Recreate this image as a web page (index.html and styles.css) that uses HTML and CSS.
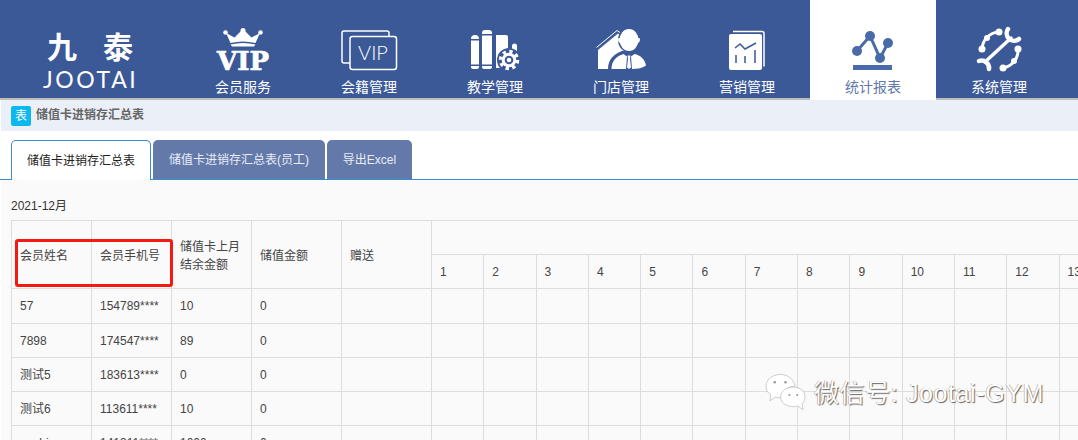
FILE: index.html
```html
<!DOCTYPE html>
<html lang="zh-CN">
<head>
<meta charset="utf-8">
<title>储值卡进销存汇总表</title>
<link rel="stylesheet" href="styles.css">
</head>
<body>
<header class="nav">
  <div class="logo">
    <div class="logo-cn"><span>九</span><span>泰</span></div>
    <div class="logo-en">JOOTAI</div>
  </div>
  <a class="nav-item">
    <svg class="nav-icon" viewBox="0 0 126 60">
      <path fill="#fff" d="M46 13l8.500 4.500L62 10h2l7.500 7.500L80 13l-4.500 10q-12.500-3-25 0z"/>
      <path fill="#fff" d="M50.500 24.500q12.500-3 25 0l-1.500 2H52z"/>
      <circle cx="45.500" cy="12.500" r="2.300" fill="#fff"/><circle cx="63" cy="10.500" r="2.500" fill="#fff"/><circle cx="80.500" cy="12.500" r="2.300" fill="#fff"/>
      <text x="63" y="50" class="vip-word">VIP</text>
    </svg>
    <span class="nav-label">会员服务</span>
  </a>
  <a class="nav-item">
    <svg class="nav-icon" viewBox="0 0 126 60">
      <path fill="none" stroke="#fff" stroke-width="1.500" d="M44 43h-6a2 2 0 0 1-2-2V13a2 2 0 0 1 2-2h43a2 2 0 0 1 2 2v3"/>
      <rect x="44" y="16.500" width="46.500" height="33" rx="2.500" fill="none" stroke="#fff" stroke-width="1.500"/>
      <text x="67" y="40" class="card-vip">VIP</text>
    </svg>
    <span class="nav-label">会籍管理</span>
  </a>
  <a class="nav-item">
    <svg class="nav-icon" viewBox="0 0 126 60">
      <g fill="#fff">
        <path d="M39 19a4 4 0 0 1 8 0z"/><rect x="39" y="20.500" width="8" height="24"/><path d="M39 46h8v1a2 2 0 0 1-2 2h-4a2 2 0 0 1-2-2z"/>
        <path d="M50 13a3 3 0 0 1 3-3h4a3 3 0 0 1 3 3v1H50z"/><rect x="50" y="15.500" width="10" height="29"/><path d="M50 46h10v1a2 2 0 0 1-2 2h-6a2 2 0 0 1-2-2z"/>
        <path d="M64 15h10a2 2 0 0 1 2 2v31H64z"/>
        <path d="M80 26a2.500 2.500 0 0 1 5 0v7h-5z"/>
      </g>
      <circle cx="77" cy="40" r="12" fill="#3b5997"/>
      <circle cx="77" cy="40" r="8.500" fill="none" stroke="#fff" stroke-width="3.500" stroke-dasharray="3.300 3.380"/>
      <circle cx="77" cy="40" r="7.300" fill="#fff"/><circle cx="77" cy="40" r="4.300" fill="#3b5997"/><circle cx="77" cy="40" r="2.300" fill="#fff"/>
    </svg>
    <span class="nav-label">教学管理</span>
  </a>
  <a class="nav-item">
    <svg class="nav-icon" viewBox="0 0 126 60">
      <path fill="none" stroke="#fff" stroke-width="1" d="M38.500 27.500L59 10.500l3 2"/>
      <path fill="#fff" d="M40 30L60 13.500 70 22V40L60 49H40z"/>
      <ellipse cx="71" cy="20" rx="11" ry="12.500" fill="#3b5997"/>
      <ellipse cx="71" cy="20" rx="9.500" ry="11" fill="#fff"/>
      <path fill="#fff" d="M60.500 18h21c1 2 0 5-2 5h-17c-2 0-3-3-2-5z"/>
      <path fill="#3b5997" d="M50 49c0-10 6-15 14-18h14l10 15v3z"/>
      <path fill="#fff" d="M53.500 49c0-8 5-13 12-15l3.500 2.500-1 12.500zM74 49l-1-12.500 3.500-2.500c6 1 10.500 5.500 11.500 11.500-3 2.500-8 3.500-14 3.500z"/>
      <path fill="#fff" d="M69.500 35.500h3l-.5 3 1 9-2 1.500-2-1.500 1-9z"/>
    </svg>
    <span class="nav-label">门店管理</span>
  </a>
  <a class="nav-item">
    <svg class="nav-icon" viewBox="0 0 126 60">
      <path fill="none" stroke="#fff" stroke-width="1.500" d="M49 11.500h29a2 2 0 0 1 2 2v33"/>
      <rect x="45" y="14" width="33" height="36" rx="2" fill="#fff"/>
      <path fill="none" stroke="#3b5997" stroke-width="1.500" d="M51 28l5-4 5 5 11-6"/>
      <path fill="none" stroke="#3b5997" stroke-width="1.500" d="M52 35v8M61 36v7M71 30v13"/>
    </svg>
    <span class="nav-label">营销管理</span>
  </a>
  <a class="nav-item nav-item-active">
    <svg class="nav-icon" viewBox="0 0 126 60">
      <path fill="none" stroke="#4a6ba9" stroke-width="3" d="M47 31L60 16l10 22 8-15"/>
      <g fill="#4a6ba9"><circle cx="47" cy="31" r="5"/><circle cx="60" cy="16" r="5"/><circle cx="70" cy="38" r="5"/><circle cx="78" cy="23" r="5"/><rect x="43" y="45" width="39" height="5"/></g>
    </svg>
    <span class="nav-label">统计报表</span>
  </a>
  <a class="nav-item">
    <svg class="nav-icon" viewBox="0 0 126 60">
      <g fill="none" stroke="#fff" stroke-linecap="round">
        <path stroke-width="3" d="M46 29A18 18 0 0 1 62 12"/>
        <path stroke-width="3" d="M82 29A18 18 0 0 1 67 48"/>
        <path stroke-width="3.500" d="M49 42L75 18"/>
        <path stroke-width="4.500" d="M72 9A7.500 7.500 0 0 0 83 19"/>
        <path stroke-width="4.500" d="M43 41A7.500 7.500 0 0 1 53 49"/>
      </g>
      <g fill="#fff"><circle cx="46" cy="29" r="3.500"/><circle cx="63" cy="12" r="3.500"/><circle cx="82" cy="29" r="3.500"/><circle cx="67" cy="48" r="3.500"/><circle cx="51" cy="18" r="3"/><circle cx="78" cy="41" r="3"/></g>
    </svg>
    <span class="nav-label">系统管理</span>
  </a>
</header>

<div class="crumb">
  <span class="crumb-icon">表</span>
  <span class="crumb-text">储值卡进销存汇总表</span>
</div>

<div class="tabs">
  <a class="tab tab-active">储值卡进销存汇总表</a>
  <a class="tab tab-wide">储值卡进销存汇总表(员工)</a>
  <a class="tab tab-export">导出Excel</a>
</div>

<main class="panel">
  <div class="period">2021-12月</div>
  <table class="report">
    <colgroup>
      <col class="c-80"><col class="c-80"><col class="c-80"><col class="c-90"><col class="c-90">
      <col class="c-day"><col class="c-day"><col class="c-day"><col class="c-day"><col class="c-day"><col class="c-day"><col class="c-day"><col class="c-day"><col class="c-day"><col class="c-day"><col class="c-day"><col class="c-day"><col class="c-day">
    </colgroup>
    <thead>
      <tr class="r-top">
        <th rowspan="2" class="th-main">会员姓名</th>
        <th rowspan="2" class="th-main">会员手机号</th>
        <th rowspan="2" class="th-main">储值卡上月<br>结余金额</th>
        <th rowspan="2" class="th-main">储值金额</th>
        <th rowspan="2" class="th-main">赠送</th>
        <th colspan="13"></th>
      </tr>
      <tr class="r-days">
        <th>1</th><th>2</th><th>3</th><th>4</th><th>5</th><th>6</th><th>7</th><th>8</th><th>9</th><th>10</th><th>11</th><th>12</th><th>13</th>
      </tr>
    </thead>
    <tbody>
      <tr class="r-first"><td>57</td><td>154789****</td><td>10</td><td>0</td><td></td><td></td><td></td><td></td><td></td><td></td><td></td><td></td><td></td><td></td><td></td><td></td><td></td><td></td></tr>
      <tr><td>7898</td><td>174547****</td><td>89</td><td>0</td><td></td><td></td><td></td><td></td><td></td><td></td><td></td><td></td><td></td><td></td><td></td><td></td><td></td><td></td></tr>
      <tr><td>测试5</td><td>183613****</td><td>0</td><td>0</td><td></td><td></td><td></td><td></td><td></td><td></td><td></td><td></td><td></td><td></td><td></td><td></td><td></td><td></td></tr>
      <tr><td>测试6</td><td>113611****</td><td>10</td><td>0</td><td></td><td></td><td></td><td></td><td></td><td></td><td></td><td></td><td></td><td></td><td></td><td></td><td></td><td></td></tr>
      <tr><td>sunbin</td><td>141311****</td><td>1000</td><td>0</td><td></td><td></td><td></td><td></td><td></td><td></td><td></td><td></td><td></td><td></td><td></td><td></td><td></td><td></td></tr>
    </tbody>
  </table>
</main>

<div class="highlight"></div>

<div class="watermark">
  <svg class="wm-icon" viewBox="0 0 42 40">
    <path fill="#fff" stroke="#bdbdbd" stroke-width=".8" d="M16 1C8 1 1 6 1 13c0 4 2 7 5 9l-1 6 6-4c2 1 4 1 6 1h1c-1-6 5-12 12-12h1C29 6 24 1 16 1z"/>
    <path fill="#fff" stroke="#bdbdbd" stroke-width=".8" d="M29 14c-7 0-13 4-13 10s6 10 13 10c2 0 3 0 4-1l6 4-1-6c2-2 3-4 3-7 0-6-5-10-12-10z"/>
    <circle cx="10" cy="9" r="1.300" fill="#999"/><circle cx="21" cy="9" r="1.300" fill="#999"/>
    <circle cx="25" cy="22" r="1.100" fill="#999"/><circle cx="33" cy="22" r="1.100" fill="#999"/>
  </svg>
  <span class="wm-text">微信号: Jootai-GYM</span>
</div>
</body>
</html>
```

FILE: styles.css
```css
* { box-sizing: border-box; }
html, body { margin: 0; padding: 0; }
body {
  width: 1078px;
  height: 440px;
  overflow: hidden;
  position: relative;
  background: #fff;
  color: #333;
  font: 12px/1.4 "Liberation Sans", "Noto Sans CJK SC", sans-serif;
}

.nav {
  display: flex;
  height: 100px;
  background: #3b5997;
  border-bottom: 2px solid #bdbdbd;
}
.logo {
  width: 180px;
  padding: 29px 0 0 47px;
  color: #fff;
}
.logo-cn {
  display: flex;
  gap: 26px;
  font: 700 30px/32px "Noto Sans CJK SC", sans-serif;
}
.logo-en {
  font: 400 23px/24px "Lato", sans-serif;
  letter-spacing: 2.600px;
  margin: 6px 0 0 -4px;
}
.nav-item {
  position: relative;
  width: 126px;
  height: 98px;
  color: #fff;
  display: flex;
  flex-direction: column;
  align-items: center;
}
.nav-icon {
  position: absolute;
  left: 0;
  top: 20px;
  width: 126px;
  height: 60px;
}
.nav-label {
  position: absolute;
  top: 78px;
  font-size: 14px;
  line-height: 18px;
  white-space: nowrap;
}
.nav-item-active {
  background: #fff;
  height: 100px;
  color: #5f79aa;
  z-index: 1;
}
.vip-word {
  fill: #fff;
  stroke: #fff;
  stroke-width: .7px;
  font: 700 26px "DejaVu Serif", serif;
  text-anchor: middle;
}
.card-vip {
  fill: #fff;
  font: 300 20px "Lato", sans-serif;
  text-anchor: middle;
}

.crumb {
  height: 31px;
  background: #ebf0f8;
  margin-left: 1px;
  display: flex;
  align-items: center;
  padding: 0 0 0 10px;
  gap: 5px;
}
.crumb-icon {
  width: 20px;
  height: 20px;
  border-radius: 2px;
  background: #0cb8ee;
  color: #fff;
  font-size: 12px;
  line-height: 20px;
  text-align: center;
}
.crumb-text {
  color: #666;
  font-weight: 700;
  font-size: 12px;
}

.tabs {
  display: flex;
  align-items: flex-end;
  height: 49px;
  padding: 10px 0 0 11px;
  gap: 2px;
  border-bottom: 1px solid #3a8ed0;
}
.tab {
  height: 39px;
  line-height: 40px;
  text-align: center;
  background: #6379aa;
  color: #e8edf6;
  border-radius: 5px 5px 0 0;
  font-size: 12px;
}
.tab-active {
  width: 140px;
  height: 40px;
  margin-bottom: -1px;
  background: #fff;
  color: #222;
  border: 1px solid #3a8ed0;
  border-bottom: 0;
}
.tab-wide { width: 172px; }
.tab-export { width: 85px; }

.panel {
  height: 260px;
  margin-left: 1px;
  background: #fafafa;
  padding: 18px 0 0 10px;
  overflow: hidden;
}
.period {
  height: 22px;
  line-height: 16px;
  font-size: 12px;
}
.report {
  border-collapse: collapse;
  table-layout: fixed;
  width: 1099.900px;
  font-size: 12px;
  color: #444;
}
.c-80 { width: 80px; }
.c-90 { width: 90px; }
.c-day { width: 52.300px; }
.report th, .report td {
  border: 1px solid #ddd;
  padding: 0 8px;
  text-align: left;
  font-weight: 400;
  line-height: 18px;
  white-space: nowrap;
}
.report .th-main { padding-top: 2px; }
.r-top th { height: 34px; }
.r-days th { height: 34px; }
.report tbody tr { height: 34px; }
.report tbody tr.r-first { height: 35px; }

.highlight {
  position: absolute;
  left: 15px;
  top: 239px;
  width: 158px;
  height: 48px;
  border: 3px solid #f5190f;
  border-radius: 3px;
}
.watermark {
  position: absolute;
  left: 765px;
  top: 373px;
  display: flex;
  align-items: center;
  gap: 8px;
}
.wm-icon { width: 41px; height: 40px; }
.wm-text {
  font-size: 25px;
  line-height: 30px;
  color: #fff;
  letter-spacing: .6px;
  text-shadow: 1px 1px 1px #666, -.5px -.5px 0 #999;
  white-space: nowrap;
}
```
